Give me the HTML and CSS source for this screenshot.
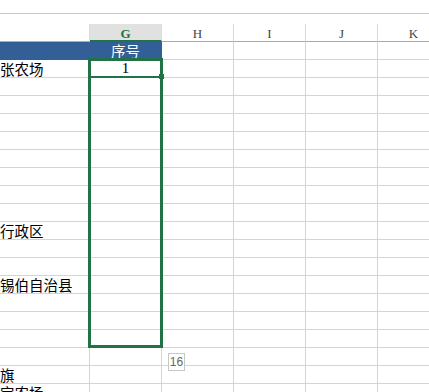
FILE: index.html
```html
<!DOCTYPE html>
<html lang="zh-CN">
<head>
    <meta charset="UTF-8">
    <title>序号</title>
    <link rel="stylesheet" href="styles.css">
</head>
<body>
    <div class="formula-bar"></div>

    <div class="sheet" id="sheet">
        <div class="col-head"></div>
        <div class="col-head active">G</div>
        <div class="col-head">H</div>
        <div class="col-head">I</div>
        <div class="col-head">J</div>
        <div class="col-head">K</div>

        <div class="selection"></div>
        <div class="active-line"></div>
        <div class="fill-handle"></div>
        <div class="count-tip">16</div>
    </div>

    <script>
        // colonne F (texte), colonne G (numéro) ; le reste est vide
        const rows = [
            ["", "序号"],
            ["伊犁河谷张农场", "1"],
            ["", ""], ["", ""], ["", ""], ["", ""], ["", ""], ["", ""], ["", ""], ["", ""],
            ["直辖县级行政区", ""],
            ["", ""], ["", ""],
            ["察布查尔锡伯自治县", ""],
            ["", ""], ["", ""], ["", ""], ["", ""],
            ["阿拉善左旗", ""],
            ["博州精河宝农场", ""],
            ["", ""]
        ];

        const sheet = document.getElementById("sheet");
        rows.forEach((row, i) => {
            for (let c = 0; c < 6; c++) {
                const cell = document.createElement("div");
                cell.className = "cell";
                if (c === 0) cell.classList.add("text");
                if (c === 1) cell.classList.add("num");
                if (i === 0 && c < 2) cell.classList.add("title");
                if (c < 2) cell.textContent = row[c];
                sheet.insertBefore(cell, sheet.querySelector(".selection"));
            }
        });
    </script>
</body>
</html>
```

FILE: styles.css
```css
body {
    margin: 0;
    width: 429px;
    height: 392px;
    overflow: hidden;
    background: #fff;
    font-family: "Noto Sans CJK SC", "Noto Sans", sans-serif;
}
.formula-bar {
    height: 13px;
    border-bottom: 1px solid #c6c6c6;
    margin-bottom: 10px;
}
.sheet {
    position: relative;
    margin-left: -60px;
    display: grid;
    grid-template-columns: 150px 72px 72px 72px 72px 72px;
    grid-auto-rows: 18px;
}
.col-head {
    box-sizing: border-box;
    border-right: 1px solid #dadada;
    border-bottom: 1px solid #ababab;
    font-family: "Liberation Serif", serif;
    font-size: 13px;
    line-height: 19px;
    color: #444;
    text-align: center;
}
.col-head.active {
    background: #e1e1e1;
    border-bottom: 2px solid #217346;
    color: #217346;
    font-weight: bold;
}
.cell {
    box-sizing: border-box;
    border-right: 1px solid #d4d4d4;
    border-bottom: 1px solid #d4d4d4;
    font-size: 14.5px;
    line-height: 17px;
    white-space: nowrap;
    overflow: hidden;
    color: #000;
}
.cell.text {
    padding-left: 2px;
}
.cell.num {
    text-align: center;
    font-family: "Liberation Serif", serif;
    font-size: 15px;
}
.cell.title {
    background: #325f96;
    border-color: #325f96;
    color: #fff;
    font-family: "Noto Sans CJK SC", sans-serif;
    font-size: 14.5px;
}
.selection {
    position: absolute;
    left: 148px;
    top: 34px;
    width: 75px;
    height: 290px;
    box-sizing: border-box;
    border: 3px solid #217346;
}
.active-line {
    position: absolute;
    left: 150px;
    top: 52px;
    width: 71px;
    height: 2px;
    background: #217346;
}
.fill-handle {
    position: absolute;
    left: 219px;
    top: 50px;
    width: 5px;
    height: 5px;
    background: #217346;
}
.count-tip {
    position: absolute;
    left: 228px;
    top: 329px;
    width: 17px;
    height: 18px;
    box-sizing: border-box;
    border: 1px solid #c6c6c6;
    background: #fff;
    font-family: "Liberation Sans", sans-serif;
    font-size: 12px;
    line-height: 16px;
    color: #666;
    text-align: center;
}
```
